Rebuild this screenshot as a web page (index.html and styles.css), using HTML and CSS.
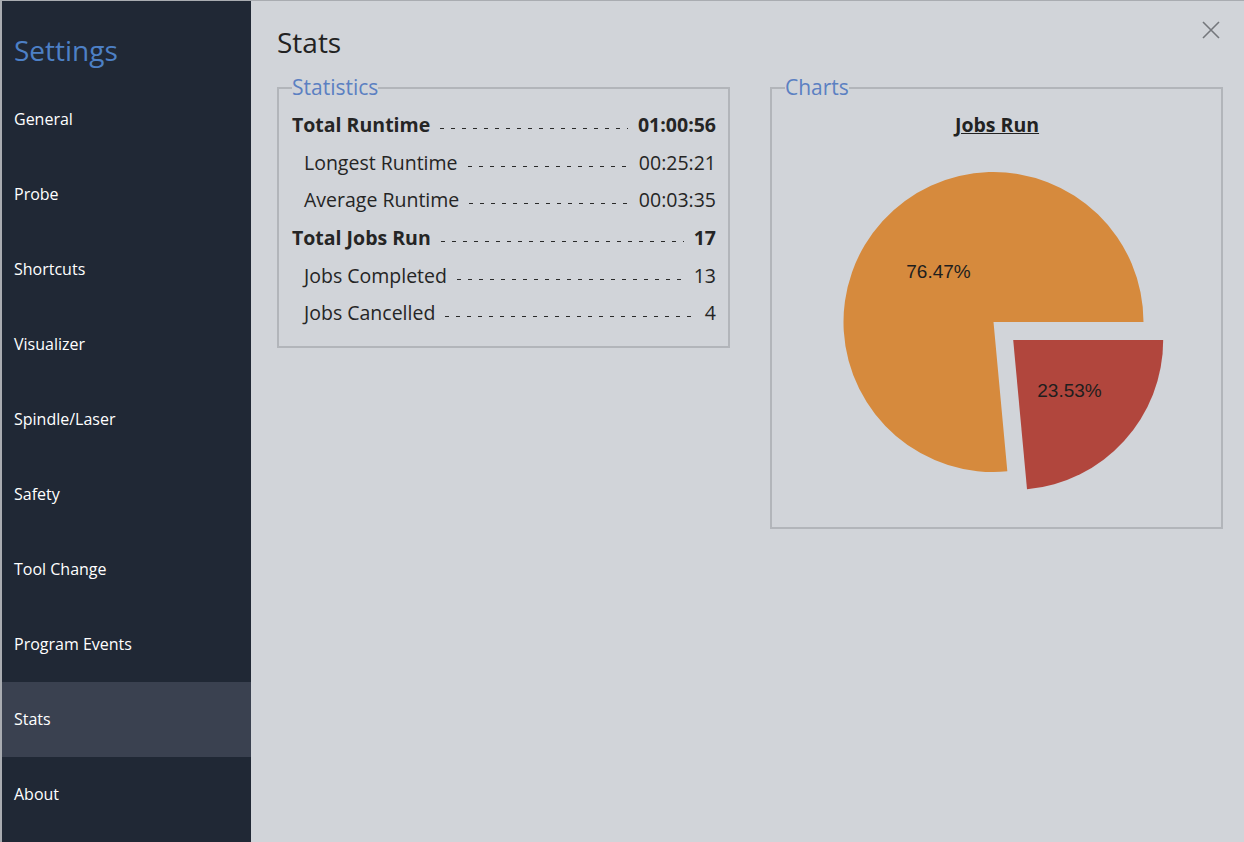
FILE: index.html
```html
<!DOCTYPE html>
<html lang="en">
<head>
<meta charset="utf-8">
<title>Settings - Stats</title>
<link rel="stylesheet" href="styles.css">
</head>
<body>
<div class="app">
  <nav class="sidebar">
    <div class="sidebar-title">Settings</div>
    <ul class="nav">
      <li class="nav-item">General</li>
      <li class="nav-item">Probe</li>
      <li class="nav-item">Shortcuts</li>
      <li class="nav-item">Visualizer</li>
      <li class="nav-item">Spindle/Laser</li>
      <li class="nav-item">Safety</li>
      <li class="nav-item">Tool Change</li>
      <li class="nav-item">Program Events</li>
      <li class="nav-item active">Stats</li>
      <li class="nav-item">About</li>
    </ul>
  </nav>
  <main class="main">
    <button class="close" aria-label="Close">
      <svg width="18" height="18" viewBox="0 0 18 18"><path d="M1 1L17 17M17 1L1 17" stroke="#74777c" stroke-width="1.6" fill="none"/></svg>
    </button>
    <h1 class="page-title">Stats</h1>
    <div class="panels">
      <fieldset class="panel">
        <legend class="panel-legend">Statistics</legend>
        <div class="stat-row major"><span class="label">Total Runtime</span><span class="leader"></span><span class="value">01:00:56</span></div>
        <div class="stat-row minor"><span class="label">Longest Runtime</span><span class="leader"></span><span class="value">00:25:21</span></div>
        <div class="stat-row minor"><span class="label">Average Runtime</span><span class="leader"></span><span class="value">00:03:35</span></div>
        <div class="stat-row major"><span class="label">Total Jobs Run</span><span class="leader"></span><span class="value">17</span></div>
        <div class="stat-row minor"><span class="label">Jobs Completed</span><span class="leader"></span><span class="value">13</span></div>
        <div class="stat-row minor"><span class="label">Jobs Cancelled</span><span class="leader"></span><span class="value">4</span></div>
      </fieldset>
      <fieldset class="panel chart-panel">
        <legend class="panel-legend">Charts</legend>
        <div class="chart-title">Jobs Run</div>
        <svg class="pie" width="420" height="383" viewBox="0 0 420 383">
          <path d="M206.5 178 L220.33 327.36 A150 150 0 1 1 356.5 178 Z" fill="#d68a3d"/>
          <path d="M226.2 196 L376.2 196 A150 150 0 0 1 240.03 345.36 Z" fill="#b1463d"/>
          <text x="151.5" y="127.2" class="pie-label">76.47%</text>
          <text x="282.5" y="246.2" class="pie-label">23.53%</text>
        </svg>
      </fieldset>
    </div>
  </main>
</div>
</body>
</html>
```

FILE: styles.css
```css
* { box-sizing: border-box; }
html, body {
  margin: 0;
  padding: 0;
  height: 100%;
  overflow: hidden;
}
body {
  font-family: "Open Sans", "Liberation Sans", sans-serif;
  background: #d1d4d9;
}
.app {
  display: flex;
  height: 100vh;
  border-top: 1px solid #a9acb1;
  border-left: 2px solid #a9acb1;
}
.sidebar {
  width: 249px;
  flex: none;
  background: #202835;
  color: #fff;
}
.sidebar-title {
  font-size: 28px;
  line-height: 38px;
  color: #4d80c6;
  padding: 30px 12px 13px;
}
.nav {
  list-style: none;
  margin: 0;
  padding: 0;
}
.nav-item {
  height: 75px;
  display: flex;
  align-items: center;
  padding-left: 12px;
  padding-bottom: 2px;
  font-size: 16px;
  color: #ffffff;
}
.nav-item.active {
  background: #3a4150;
}
.main {
  flex: 1;
  position: relative;
  padding: 0 21px 0 26px;
  color: #222;
}
.close {
  position: absolute;
  top: 20px;
  right: 24px;
  width: 18px;
  height: 18px;
  padding: 0;
  border: 0;
  background: none;
  display: block;
}
.close svg { display: block; }
.page-title {
  margin: 22px 0 0;
  font-size: 28px;
  line-height: 38px;
  font-weight: 400;
  color: #222;
}
.panels {
  display: grid;
  grid-template-columns: 1fr 1fr;
  column-gap: 40px;
  align-items: start;
  margin-top: 13px;
}
.panel {
  margin: 0;
  min-width: 0;
  border: 2px solid #b2b5ba;
  padding: 5px 12px 14px 13px;
}
.panel-legend {
  padding: 0;
  font-size: 21px;
  line-height: 27px;
  color: #5b80c2;
}
.stat-row {
  display: flex;
  align-items: center;
  height: 37.6px;
  font-size: 19.5px;
  color: #252525;
}
.stat-row.major { font-weight: 700; }
.stat-row.minor { padding-left: 12px; }
.label, .value { white-space: nowrap; }
.leader {
  flex: 1;
  height: 1px;
  margin: 8px 10px 0;
  background-image: linear-gradient(to right, #2a2a2a 0 4px, transparent 4px 11px);
  background-size: 11px 1px;
  background-repeat: repeat-x;
}
.chart-panel { padding-bottom: 0; }
.chart-title {
  height: 37.6px;
  display: flex;
  align-items: center;
  justify-content: center;
  font-size: 19.5px;
  font-weight: 700;
  text-decoration: underline;
  color: #222;
}
.pie {
  display: block;
  margin: 0 auto;
}
.pie-label {
  font-family: "Liberation Sans", Arial, sans-serif;
  font-size: 19px;
  fill: #1e1e1e;
  text-anchor: middle;
  dominant-baseline: central;
}
```
